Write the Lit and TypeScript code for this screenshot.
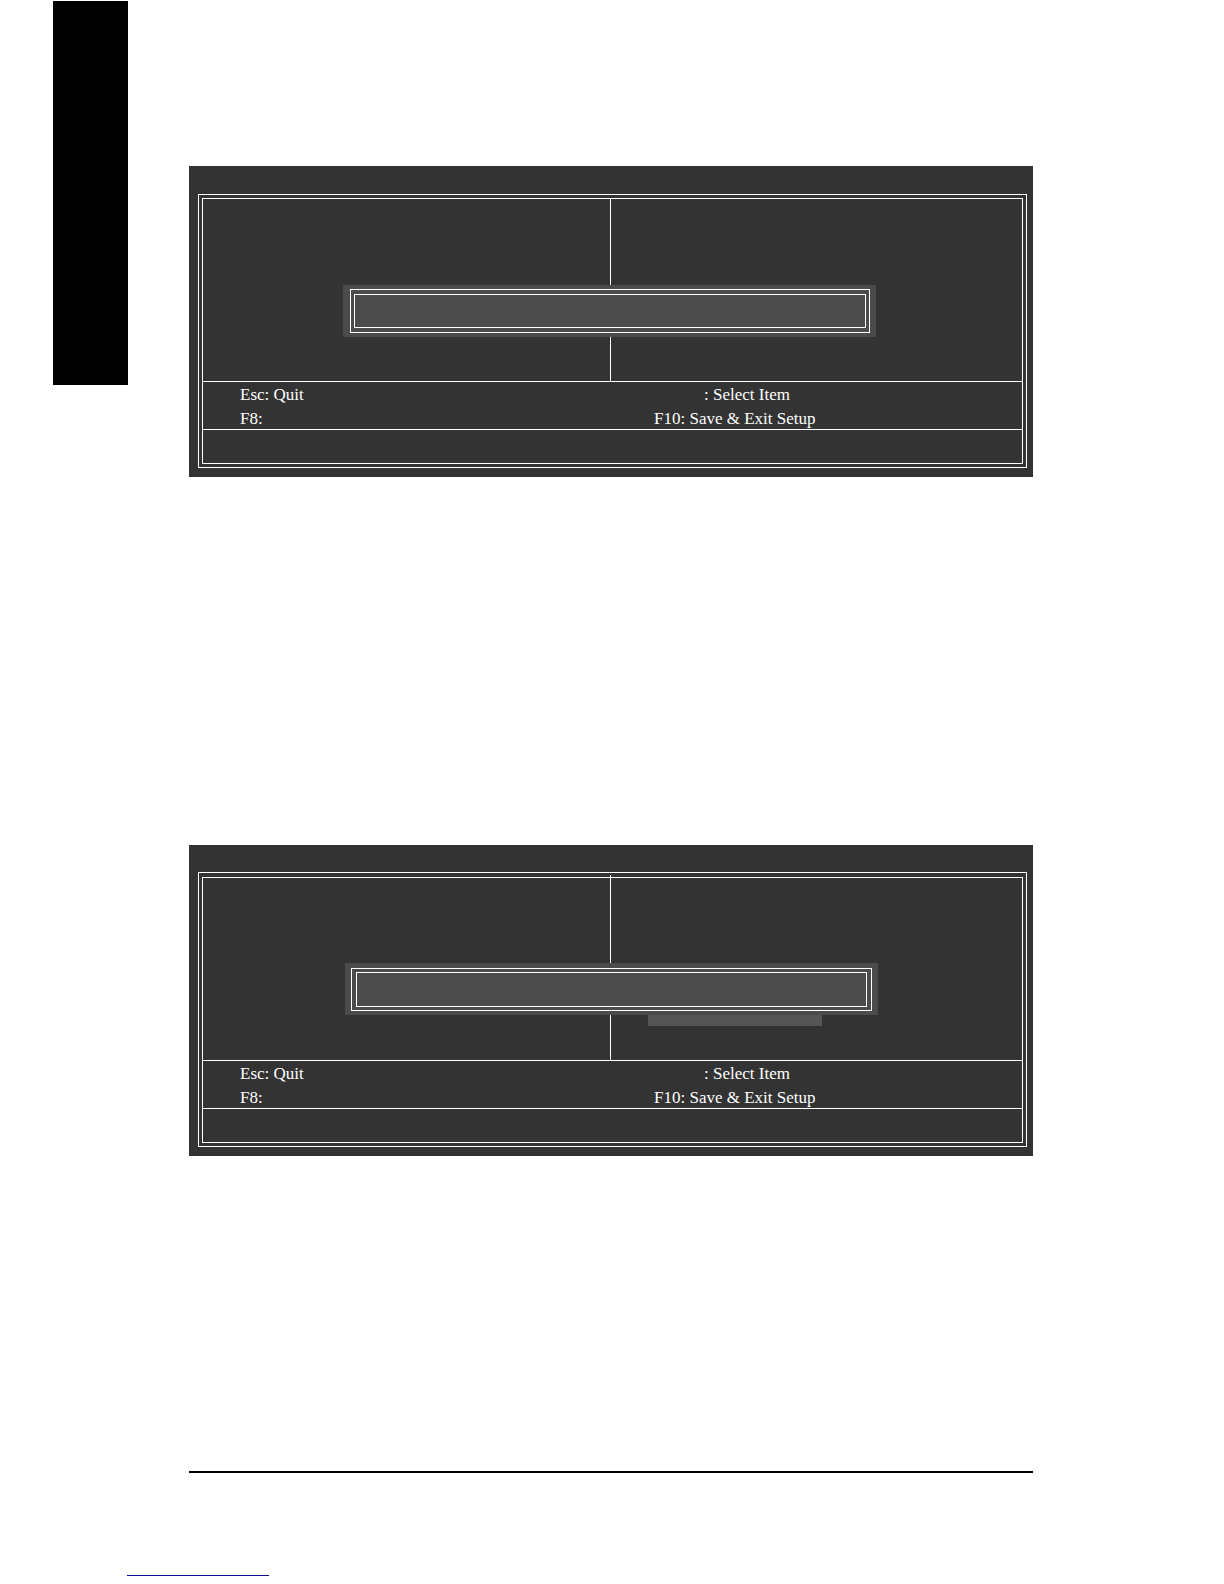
import { LitElement, html, css, nothing } from "lit";
import { customElement, property } from "lit/decorators.js";
import { classMap } from "lit/directives/class-map.js";

@customElement("bios-screen")
class BiosScreen extends LitElement {
  @property({ type: Boolean }) selected = false;

  static styles = css`
    :host {
      display: block;
    }
    .screen {
      padding: 28px 6px 9px 9px;
      background: #333;
      color: #fff;
      font: 17px/18px "Liberation Serif", "Times New Roman", serif;
    }
    .outer {
      border: 1px solid #fff;
      padding: 3px;
    }
    .inner {
      border: 1px solid #fff;
    }
    .selected .outer {
      padding-top: 4px;
    }
    .selected.screen {
      padding-top: 27px;
    }
    .body {
      position: relative;
      display: grid;
      grid-template-columns: 407fr 1px 411fr;
      min-height: 182px;
    }
    .divider {
      background: #fff;
    }
    .selected .divider {
      margin-top: -3px;
    }
    .options {
      padding: 137px 37px 0;
    }
    .highlight {
      width: 174px;
      height: 11px;
      background: #555;
    }
    .dialog {
      position: absolute;
      top: 86px;
      left: 140px;
      right: 146px;
      height: 52px;
      box-sizing: border-box;
      display: flex;
      padding: 4px 6px 4px 7px;
      background: #4b4b4b;
    }
    .dialog-outer {
      flex: 1;
      display: flex;
      padding: 4px 3px;
      border: 1px solid #fff;
    }
    .dialog-inner {
      flex: 1;
      border: 1px solid #fff;
    }
    .selected .dialog {
      top: 85px;
      left: 142px;
      right: 144px;
      padding: 5px 6px 4px;
    }
    .selected .dialog-outer {
      padding: 3px 4px;
    }
    .keys {
      display: grid;
      grid-template-columns: 408fr 411fr;
      row-gap: 6px;
      padding: 4px 0 1px;
      border-top: 1px solid #fff;
      border-bottom: 1px solid #fff;
    }
    .left {
      padding-left: 37px;
    }
    .right {
      padding-left: 43px;
    }
    .arrows {
      padding-left: 93px;
    }
    .help {
      min-height: 33px;
    }
  `;

  render() {
    return html`
      <section class=${classMap({ screen: true, selected: this.selected })}>
        <div class="outer">
          <div class="inner">
            <div class="body">
              <div></div>
              <div class="divider"></div>
              <div class="options">
                ${this.selected ? html`<div class="highlight"></div>` : nothing}
              </div>
              <div class="dialog">
                <div class="dialog-outer"><div class="dialog-inner"></div></div>
              </div>
            </div>
            <div class="keys">
              <span class="left">Esc: Quit</span>
              <span class="arrows">: Select Item</span>
              <span class="left">F8:</span>
              <span class="right">F10: Save &amp; Exit Setup</span>
            </div>
            <div class="help"></div>
          </div>
        </div>
      </section>
    `;
  }
}

@customElement("app-root")
class AppRoot extends LitElement {
  static styles = css`
    :host {
      display: block;
      background: #fff;
    }
    .sheet {
      display: flex;
      align-items: flex-start;
      padding: 0 191px 0 53px;
    }
    .tab {
      flex: none;
      width: 75px;
      height: 384px;
      margin-top: 1px;
      background: #000;
    }
    .content {
      flex: 1;
      min-width: 0;
      margin-left: 61px;
      padding-top: 166px;
    }
    .first {
      margin-bottom: 368px;
    }
    .rule {
      height: 2px;
      margin-top: 315px;
      background: #000;
    }
    .footer {
      padding: 102px 0 8px 127px;
    }
    .underline {
      width: 142px;
      height: 1px;
      background: #10108c;
    }
  `;

  render() {
    return html`
      <div class="sheet">
        <div class="tab"></div>
        <main class="content">
          <bios-screen class="first"></bios-screen>
          <bios-screen selected></bios-screen>
          <div class="rule"></div>
        </main>
      </div>
      <footer class="footer"><div class="underline"></div></footer>
    `;
  }
}
